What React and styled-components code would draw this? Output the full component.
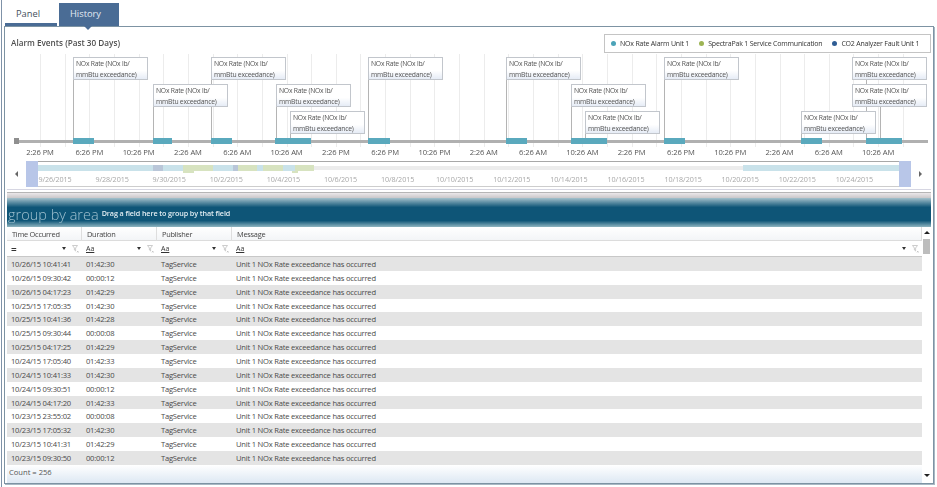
import { createGlobalStyle } from 'styled-components';
import styled from 'styled-components';

const GlobalStyle = createGlobalStyle`
  html, body {
    margin: 0;
    padding: 0;
    background: #ffffff;
  }
  body {
    font-family: "Open Sans", "Liberation Sans", sans-serif;
    font-size: 8px;
    color: #3c3c3c;
  }
  * {
    box-sizing: border-box;
  }
`;

const Page = styled.div`
  width: 936px;
  height: 487px;
  margin-left: 1px;
  padding: 3px 3px 3px 2px;
  border-left: 1px solid #7f92a8;
  display: flex;
  flex-direction: column;
  overflow: hidden;
  filter: blur(0.3px);
`;

const Tabs = styled.div`
  display: flex;
  height: 23px;
  padding-left: 1px;
  gap: 2px;
`;

const Tab = styled.div`
  width: ${(p) => (p.$active ? 60 : 52)}px;
  position: relative;
  font-size: 9.3px;
  padding-left: 11px;
  line-height: 22px;
  color: ${(p) => (p.$active ? '#e4ebf3' : '#44505c')};
  background: ${(p) => (p.$active ? '#4a6c95' : '#fff')};
  border-bottom: 3px solid #4a6c95;

  ${(p) =>
    p.$active &&
    `
    &::after {
      content: '';
      position: absolute;
      left: 24px;
      bottom: -7px;
      border-left: 5px solid transparent;
      border-right: 5px solid transparent;
      border-top: 5px solid #4a6c95;
    }
  `}
`;

const Frame = styled.div`
  flex: 1;
  border: 1px solid #7d93a3;
  box-shadow: 1px 1px 0 #a9b8c4;
  display: flex;
  flex-direction: column;
  padding: 0 2px;
  min-height: 0;
`;

const ChartHead = styled.div`
  display: flex;
  justify-content: space-between;
  align-items: flex-start;
  height: 27px;
  padding: 8px 0 0 4px;
`;

const ChartTitle = styled.div`
  font-size: 8.2px;
  font-weight: 600;
  color: #4f4f4f;
  line-height: 16px;
`;

const Legend = styled.div`
  display: flex;
  align-items: center;
  gap: 10px;
  height: 19px;
  margin: -1px 0 0 0;
  padding: 0 6px;
  border: 1px solid #c4c4c4;
  width: 327px;
  font-size: 7px;
  letter-spacing: -0.2px;
  color: #333;
`;

const LegendItem = styled.span`
  display: flex;
  align-items: center;
  gap: 4px;
  white-space: nowrap;

  &::before {
    content: '';
    width: 5px;
    height: 5px;
    border-radius: 50%;
    background: ${(p) => p.$color};
  }
`;

const Chart = styled.div`
  position: relative;
  height: 107px;
`;

const GridLine = styled.div`
  position: absolute;
  top: 0;
  height: 93px;
  width: 1px;
  background: #ececec;
`;

const Axis = styled.div`
  position: absolute;
  left: 8px;
  right: 3px;
  top: 86px;
  height: 3px;
  background: #b0b0b0;
`;

const AxisStart = styled.div`
  position: absolute;
  left: 7px;
  top: 84px;
  width: 5px;
  height: 6px;
  background: #8f8f8f;
`;

const Bar = styled.div`
  position: absolute;
  top: 84px;
  height: 6px;
  background: #5aa9bd;
`;

const Stem = styled.div`
  position: absolute;
  width: 1px;
  background: #b4b4b4;
`;

const Callout = styled.div`
  position: absolute;
  width: 75px;
  height: 23px;
  padding: 1px 2px;
  line-height: 10.5px;
  font-size: 6.8px;
  letter-spacing: -0.25px;
  white-space: nowrap;
  color: #555;
  background: linear-gradient(to bottom, #ffffff 60%, #e6ecf6 100%);
  border: 1px solid #c2c6cc;
`;

const AxisLabel = styled.div`
  position: absolute;
  top: 93px;
  width: 50px;
  margin-left: -25px;
  text-align: center;
  font-size: 7.6px;
  letter-spacing: -0.1px;
  color: #555;
`;

const Navigator = styled.div`
  display: flex;
  align-items: flex-start;
  height: 29px;
  margin-bottom: 2px;
  border-bottom: 1px solid #d6d6e2;
`;

const NavArrow = styled.div`
  width: 19px;
  height: 26px;
  display: flex;
  align-items: center;
  justify-content: center;

  &::before {
    content: '';
    border-top: 3px solid transparent;
    border-bottom: 3px solid transparent;
    ${(p) => (p.$right ? 'border-left: 3px solid #666;' : 'border-right: 3px solid #666;')}
  }
`;

const NavTrack = styled.div`
  position: relative;
  width: 885px;
  height: 26px;
  border-top: 1px solid #a8a8a8;
  border-bottom: 1px solid #cdcdcd;
`;

const NavThumb = styled.div`
  position: absolute;
  top: -1px;
  bottom: -1px;
  width: 12px;
  background: #b8c6e8;
  ${(p) => (p.$right ? 'right: 0;' : 'left: 0;')}
`;

const NavBand = styled.div`
  position: absolute;
  top: ${(p) => p.$top ?? 3}px;
  height: ${(p) => p.$h ?? 6}px;
  background: ${(p) => p.$color};
`;

const NavDate = styled.div`
  position: absolute;
  top: 12px;
  width: 50px;
  margin-left: -25px;
  text-align: center;
  font-size: 7.2px;
  letter-spacing: -0.1px;
  color: #a8a8a8;
`;

const GridWrap = styled.div`
  flex: 1;
  min-height: 0;
  display: flex;
  flex-direction: column;
`;

const GreyStrip = styled.div`
  height: 6px;
  border-top: 1px solid #b5b5b5;
  background: linear-gradient(to bottom, #ebe7e9, #c9c7c9);
`;

const GroupBar = styled.div`
  height: 29px;
  display: flex;
  align-items: flex-end;
  gap: 3px;
  padding: 0 0 2px 1px;
  background: linear-gradient(to bottom, #a5c1cb 0%, #0e5577 32%, #0e5577 78%, #8fb5c0 100%);
`;

const GroupTitle = styled.span`
  font-size: 14.5px;
  font-weight: 300;
  line-height: 21px;
  color: #9fc0cf;
`;

const GroupHint = styled.span`
  font-size: 7.2px;
  font-weight: 600;
  letter-spacing: -0.1px;
  line-height: 24px;
  color: #e2edf2;
`;

const GridBody = styled.div`
  flex: 1;
  min-height: 0;
  display: grid;
  grid-template-columns: 1fr 9px;
`;

const Table = styled.div`
  min-width: 0;
  display: flex;
  flex-direction: column;
`;

const columns = '75px 75px 75px 1fr';

const HeadRow = styled.div`
  display: grid;
  grid-template-columns: ${columns};
  height: 14px;
  background: linear-gradient(to bottom, #ffffff, #f3f5f7);
  border-bottom: 1px solid #dcdcdc;
`;

const HeadCell = styled.div`
  padding-left: 5px;
  font-size: 7.4px;
  letter-spacing: -0.25px;
  line-height: 14px;
  color: #444;
  border-right: 1px solid #dedede;
`;

const FilterRow = styled.div`
  display: grid;
  grid-template-columns: ${columns};
  height: 16px;
  border-bottom: 1px solid #c8c8c8;
`;

const FilterCell = styled.div`
  display: flex;
  align-items: center;
  padding: 0 3px 0 4px;
  font-size: 7px;
  color: #333;
`;

const FilterOp = styled.span`
  flex: 1;
  text-decoration: ${(p) => (p.$text ? 'underline' : 'none')};
  font-size: ${(p) => (p.$text ? 7 : 10)}px;
  font-weight: ${(p) => (p.$text ? 400 : 600)};
`;

const Caret = styled.span`
  border-left: 2px solid transparent;
  border-right: 2px solid transparent;
  border-top: 3px solid #333;
  margin-right: 6px;
`;

const FunnelIcon = () => (
  <svg width="7" height="8" viewBox="0 0 7 8">
    <path d="M0.5 0.5h5L3.6 3v3L2.4 5V3z" fill="none" stroke="#c0c0c0" strokeWidth="0.8" />
    <path d="M5 6l1.5 1.5M6.5 6L5 7.5" stroke="#b0b0b0" strokeWidth="0.6" />
  </svg>
);

const Rows = styled.div`
  flex: 1;
  display: grid;
  grid-auto-rows: 13.86px;
`;

const Row = styled.div`
  display: grid;
  grid-template-columns: ${columns};
  background: ${(p) => (p.$shade ? '#e4e4e4' : '#fff')};
`;

const Cell = styled.div`
  padding: 1px 0 0 4px;
  font-size: 7.6px;
  letter-spacing: -0.22px;
  line-height: 12.86px;
  color: #4a4a4a;
  white-space: nowrap;
`;

const Footer = styled.div`
  height: 18px;
  padding-left: 2px;
  line-height: 15px;
  font-size: 7.6px;
  color: #555;
  background: linear-gradient(to bottom, #fff, #dde8f3);
`;

const Scrollbar = styled.div`
  position: relative;
  display: flex;
  flex-direction: column;
  align-items: center;
  justify-content: space-between;
  padding: 4px 0 6px;
  background: #fff;
`;

const ScrollUp = styled.div`
  border-left: 3px solid transparent;
  border-right: 3px solid transparent;
  border-bottom: 3px solid #222;
`;

const ScrollDown = styled.div`
  border-left: 3px solid transparent;
  border-right: 3px solid transparent;
  border-top: 3px solid #222;
`;

const ScrollThumb = styled.div`
  position: absolute;
  top: 12px;
  left: 1px;
  width: 7px;
  height: 15px;
  background: #bdbdbd;
`;

const callouts = [
  { x: 73, y: 57, stem: 73 },
  { x: 153, y: 84, stem: 153 },
  { x: 211, y: 57, stem: 211 },
  { x: 276, y: 84, stem: 276 },
  { x: 290, y: 111, stem: 290 },
  { x: 368, y: 57, stem: 368 },
  { x: 506, y: 57, stem: 506 },
  { x: 571, y: 84, stem: 571 },
  { x: 585, y: 111, stem: 585 },
  { x: 664, y: 57, stem: 664 },
  { x: 852, y: 57, stem: 866 },
  { x: 852, y: 84, stem: 880 },
  { x: 801, y: 111, stem: 801 },
];

const bars = [
  [73, 21], [153, 19], [211, 21], [275, 36], [368, 22], [506, 21],
  [571, 36], [664, 21], [801, 21], [866, 36],
];

const axisHours = ['2:26 PM', '6:26 PM', '10:26 PM', '2:26 AM', '6:26 AM', '10:26 AM'];
const axisLabels = Array.from({ length: 18 }, (_, i) => axisHours[i % 6]);

const navDates = [
  '9/26/2015', '9/28/2015', '9/30/2015', '10/2/2015', '10/4/2015', '10/6/2015', '10/8/2015',
  '10/10/2015', '10/12/2015', '10/14/2015', '10/16/2015', '10/18/2015', '10/20/2015',
  '10/22/2015', '10/24/2015',
];

// x values are relative to the left end of the track (page x 26)
const TEAL = '#c9e2ea';
const GREEN = '#d7e3c0';
const SLATE = '#b9c6d8';
const navBands = [
  { x: 12, w: 115, color: TEAL },
  { x: 127, w: 10, color: SLATE },
  { x: 137, w: 20, color: TEAL },
  { x: 157, w: 30, color: GREEN },
  { x: 157, w: 11, color: GREEN, top: 9, h: 2 },
  { x: 187, w: 20, color: TEAL },
  { x: 207, w: 5, color: SLATE },
  { x: 212, w: 19, color: GREEN },
  { x: 231, w: 6, color: TEAL },
  { x: 237, w: 20, color: GREEN },
  { x: 257, w: 12, color: TEAL },
  { x: 266, w: 6, color: GREEN, top: 9, h: 2 },
  { x: 269, w: 19, color: GREEN },
  { x: 288, w: 429, color: '#ececec', top: 4, h: 4 },
  { x: 717, w: 156, color: TEAL },
];

const rows = [
  ['10/26/15 10:41:41', '01:42:30'],
  ['10/26/15 09:30:42', '00:00:12'],
  ['10/26/15 04:17:23', '01:42:29'],
  ['10/25/15 17:05:35', '01:42:30'],
  ['10/25/15 10:41:36', '01:42:28'],
  ['10/25/15 09:30:44', '00:00:08'],
  ['10/25/15 04:17:25', '01:42:29'],
  ['10/24/15 17:05:40', '01:42:33'],
  ['10/24/15 10:41:33', '01:42:30'],
  ['10/24/15 09:30:51', '00:00:12'],
  ['10/24/15 04:17:20', '01:42:33'],
  ['10/23/15 23:55:02', '00:00:08'],
  ['10/23/15 17:05:32', '01:42:30'],
  ['10/23/15 10:41:31', '01:42:29'],
  ['10/23/15 09:30:50', '00:00:12'],
];

// chart is drawn in page coordinates minus the frame offset
const CHART_LEFT = 7;
const CHART_TOP = 54;

export default function App() {
  return (
    <>
      <GlobalStyle />
      <Page>
        <Tabs>
          <Tab>Panel</Tab>
          <Tab $active>History</Tab>
        </Tabs>
        <Frame>
          <ChartHead>
            <ChartTitle>Alarm Events (Past 30 Days)</ChartTitle>
            <Legend>
              <LegendItem $color="#4ba3b8">NOx Rate Alarm Unit 1</LegendItem>
              <LegendItem $color="#9db455">SpectraPak 1 Service Communication</LegendItem>
              <LegendItem $color="#2f5d94">CO2 Analyzer Fault Unit 1</LegendItem>
            </Legend>
          </ChartHead>
          <Chart>
            {Array.from({ length: 36 }, (_, i) => (
              <GridLine key={i} style={{ left: 33 + i * 24.65 }} />
            ))}
            <Axis />
            <AxisStart />
            {callouts.map((c, i) => (
              <Stem
                key={i}
                style={{ left: c.stem - CHART_LEFT, top: c.y - CHART_TOP, height: 141 - c.y }}
              />
            ))}
            {bars.map(([x, w], i) => (
              <Bar key={i} style={{ left: x - CHART_LEFT, width: w }} />
            ))}
            {callouts.map((c, i) => (
              <Callout key={i} style={{ left: c.x - CHART_LEFT, top: c.y - CHART_TOP }}>
                NOx Rate (NOx lb/
                <br />
                mmBtu exceedance)
              </Callout>
            ))}
            {axisLabels.map((label, i) => (
              <AxisLabel key={i} style={{ left: 33 + i * 49.3 }}>
                {label}
              </AxisLabel>
            ))}
          </Chart>
          <Navigator>
            <NavArrow />
            <NavTrack>
              {navBands.map((b, i) => (
                <NavBand
                  key={i}
                  $color={b.color}
                  $top={b.top}
                  $h={b.h}
                  style={{ left: b.x, width: b.w }}
                />
              ))}
              {navDates.map((d, i) => (
                <NavDate key={d} style={{ left: 29 + i * 57.1 }}>
                  {d}
                </NavDate>
              ))}
              <NavThumb />
              <NavThumb $right />
            </NavTrack>
            <NavArrow $right />
          </Navigator>
          <GridWrap>
            <GreyStrip />
            <GroupBar>
              <GroupTitle>group by area</GroupTitle>
              <GroupHint>Drag a field here to group by that field</GroupHint>
            </GroupBar>
            <GridBody>
              <Table>
                <HeadRow>
                  <HeadCell>Time Occurred</HeadCell>
                  <HeadCell>Duration</HeadCell>
                  <HeadCell>Publisher</HeadCell>
                  <HeadCell>Message</HeadCell>
                </HeadRow>
                <FilterRow>
                  <FilterCell>
                    <FilterOp>=</FilterOp>
                    <Caret />
                    <FunnelIcon />
                  </FilterCell>
                  <FilterCell>
                    <FilterOp $text>Aa</FilterOp>
                    <Caret />
                    <FunnelIcon />
                  </FilterCell>
                  <FilterCell>
                    <FilterOp $text>Aa</FilterOp>
                    <Caret />
                    <FunnelIcon />
                  </FilterCell>
                  <FilterCell>
                    <FilterOp $text>Aa</FilterOp>
                    <Caret />
                    <FunnelIcon />
                  </FilterCell>
                </FilterRow>
                <Rows>
                  {rows.map(([time, duration], i) => (
                    <Row key={time} $shade={i % 2 === 0}>
                      <Cell>{time}</Cell>
                      <Cell>{duration}</Cell>
                      <Cell>TagService</Cell>
                      <Cell>Unit 1 NOx Rate exceedance has occurred</Cell>
                    </Row>
                  ))}
                </Rows>
                <Footer>Count = 256</Footer>
              </Table>
              <Scrollbar>
                <ScrollUp />
                <ScrollThumb />
                <ScrollDown />
              </Scrollbar>
            </GridBody>
          </GridWrap>
        </Frame>
      </Page>
    </>
  );
}
